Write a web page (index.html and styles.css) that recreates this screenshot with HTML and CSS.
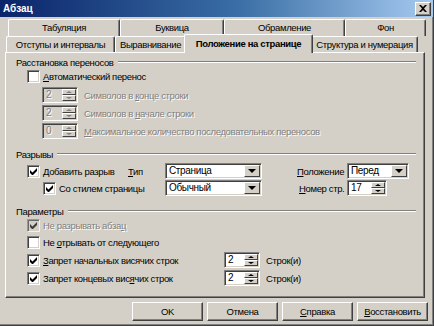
FILE: index.html
```html
<!DOCTYPE html>
<html lang="ru">
<head>
<meta charset="UTF-8" />
<title>Абзац</title>
<link rel="stylesheet" href="styles.css">
</head>
<body>

<div class="window">
  <div class="titlebar">
    <span class="title">Абзац</span>
    <span class="close">
      <svg width="8" height="7" viewBox="0 0 8 7"><path d="M0 0h2l2 2 2-2h2L5 3.5 8 7H6L4 5 2 7H0l3-3.5z" fill="#000"/></svg>
    </span>
  </div>

  <div class="tabs">
    <div class="tab-row back">
      <div class="tab" style="width:112px">Табуляция</div>
      <div class="tab" style="width:104px">Буквица</div>
      <div class="tab" style="width:121px">Обрамление</div>
      <div class="tab" style="width:81px">Фон</div>
    </div>
    <div class="tab-row front">
      <div class="tab" style="width:109px">Отступы и интервалы</div>
      <div class="tab" style="width:71px">Выравнивание</div>
      <div class="tab active" style="width:129px">Положение на странице</div>
      <div class="tab" style="width:107px">Структура и нумерация</div>
    </div>
  </div>

  <div class="panel">
    <div class="group-title first"><span>Расстановка переносов</span><i class="rule"></i></div>
    <label class="check-row">
      <span class="checkbox"></span><span><u>А</u>втоматический перенос</span>
    </label>
    <div class="spin-row disabled">
      <span class="spin"><span class="val">2</span><span class="arrows"><b class="up"></b><b class="down"></b></span></span>
      <span>Символов в <u>к</u>онце строки</span>
    </div>
    <div class="spin-row disabled">
      <span class="spin"><span class="val">2</span><span class="arrows"><b class="up"></b><b class="down"></b></span></span>
      <span>Символов в <u>н</u>ачале строки</span>
    </div>
    <div class="spin-row disabled">
      <span class="spin"><span class="val">0</span><span class="arrows"><b class="up"></b><b class="down"></b></span></span>
      <span><u>М</u>аксимальное количество последовательных переносов</span>
    </div>

    <div class="group-title"><span>Разрывы</span><i class="rule"></i></div>
    <div class="breaks">
      <label class="check-row cell-first">
        <span class="checkbox checked"></span><span>Добавить разрыв</span>
      </label>
      <span class="lbl"><u>Т</u>ип</span>
      <span class="select"><span class="val">Страница</span><span class="drop"><b class="down"></b></span></span>
      <span></span>
      <span class="lbl"><u>П</u>оложение</span>
      <span class="select short"><span class="val">Перед</span><span class="drop"><b class="down"></b></span></span>

      <label class="check-row cell-second">
        <span class="checkbox checked"></span><span>Со стилем страницы</span>
      </label>
      <span class="select"><span class="val">Обычный</span><span class="drop"><b class="down"></b></span></span>
      <span></span>
      <span class="lbl lbl-num"><u>Н</u>омер стр.</span>
      <span class="spin page"><span class="val">17</span><span class="arrows"><b class="up"></b><b class="down"></b></span></span>
    </div>

    <div class="group-title"><span>Параметры</span><i class="rule"></i></div>
    <label class="check-row p1 disabled">
      <span class="checkbox checked"></span><span>Не разрывать абза<u>ц</u></span>
    </label>
    <label class="check-row p">
      <span class="checkbox"></span><span>Не <u>о</u>трывать от следующего</span>
    </label>
    <div class="check-row p">
      <span class="check-wide"><span class="checkbox checked"></span><span><u>З</u>апрет начальных висячих строк</span></span>
      <span class="spin"><span class="val">2</span><span class="arrows"><b class="up"></b><b class="down"></b></span></span>
      <span class="unit">Строк(и)</span>
    </div>
    <div class="check-row p">
      <span class="check-wide"><span class="checkbox checked"></span><span>Запрет концевых вис<u>я</u>чих строк</span></span>
      <span class="spin"><span class="val">2</span><span class="arrows"><b class="up"></b><b class="down"></b></span></span>
      <span class="unit">Строк(и)</span>
    </div>
  </div>

  <div class="buttons">
    <button>OK</button>
    <button>Отмена</button>
    <button><u>С</u>правка</button>
    <button><u>В</u>осстановить</button>
  </div>
</div>

</body>
</html>
```

FILE: styles.css
```css
body {
  margin: 0;
  padding: 0;
  background: #d4d0c8;
  font-family: 'Liberation Sans', Arial, sans-serif;
  font-size: 9.5px;
  letter-spacing: -0.35px;
  color: #000;
}
u {
  text-decoration: underline;
  text-underline-offset: 1px;
}
.window {
  width: 434px;
  height: 326px;
  box-sizing: border-box;
  background: #d4d0c8;
  border-right: 1px solid #404040;
  border-bottom: 1px solid #404040;
  box-shadow: inset -1px -1px 0 #808080;
  overflow: hidden;
}
.titlebar {
  height: 17px;
  background: linear-gradient(to right, #0a246a, #3a6ea5 55%, #a6caf0);
  display: flex;
  align-items: center;
  justify-content: space-between;
  padding: 0 2px 0 3px;
}
.title {
  color: #fff;
  font-weight: bold;
  font-size: 10px;
  letter-spacing: 0;
}
.close {
  width: 14px;
  height: 12px;
  background: #d4d0c8;
  border-top: 1px solid #fff;
  border-left: 1px solid #fff;
  border-right: 1px solid #404040;
  border-bottom: 1px solid #404040;
  box-shadow: inset -1px -1px 0 #808080;
  display: flex;
  align-items: center;
  justify-content: center;
}

/* tabs */
.tabs {
  margin-top: 2px;
}
.tab-row {
  display: flex;
}
.tab-row.back {
  margin-left: 8px;
  height: 17px;
}
.tab-row.front {
  margin-left: 6px;
  height: 16px;
  position: relative;
  z-index: 2;
}
.tab {
  box-sizing: border-box;
  height: 100%;
  border-top: 1px solid #fff;
  border-left: 1px solid #fff;
  border-right: 1px solid #404040;
  box-shadow: inset -1px 0 0 #808080;
  border-radius: 2px 2px 0 0;
  text-align: center;
  line-height: 15px;
  white-space: nowrap;
  background: #d4d0c8;
}
.tab.active {
  font-weight: bold;
  height: 19px;
  margin: -2px -2px 0;
  line-height: 17px;
  position: relative;
  z-index: 3;
}

/* panel */
.panel {
  box-sizing: border-box;
  height: 246px;
  margin: 0 8px 0 5px;
  border-top: 1px solid #fff;
  border-left: 1px solid #fff;
  border-right: 1px solid #404040;
  border-bottom: 1px solid #404040;
  box-shadow: inset -1px -1px 0 #808080;
  padding: 0 8px 0 10px;
}
.group-title {
  display: flex;
  align-items: center;
  gap: 4px;
  height: 14px;
  margin-top: 8px;
}
.group-title.first {
  margin-top: 2px;
}
.rule {
  flex: 1;
  border-top: 1px solid #808080;
  border-bottom: 1px solid #fff;
}
.check-row {
  display: flex;
  align-items: center;
  gap: 3px;
  height: 14px;
  margin-left: 11px;
}
.checkbox {
  width: 13px;
  height: 13px;
  box-sizing: border-box;
  background: #fff;
  border-top: 1px solid #808080;
  border-left: 1px solid #808080;
  border-right: 1px solid #fff;
  border-bottom: 1px solid #fff;
  box-shadow: inset 1px 1px 0 #404040, inset -1px -1px 0 #d4d0c8;
  flex: none;
}
.checkbox.checked {
  background: #fff url("data:image/svg+xml,%3Csvg xmlns='http://www.w3.org/2000/svg' width='11' height='11'%3E%3Cpath d='M2 4v3l2 2h1l4-4V2L4.5 6.5z' fill='%23000'/%3E%3C/svg%3E") no-repeat center;
}
.disabled {
  color: #808080;
  text-shadow: 1px 1px 0 #fff;
}
.disabled .checkbox {
  background-color: #d4d0c8;
  opacity: 0.7;
}

.spin-row {
  display: flex;
  align-items: center;
  gap: 6px;
  height: 16px;
  margin: 2px 0 0 26px;
}
.check-row + .spin-row {
  margin-top: 4px;
}
.spin, .select {
  box-sizing: border-box;
  height: 16px;
  width: 36px;
  display: flex;
  align-items: center;
  background: #fff;
  border-top: 1px solid #808080;
  border-left: 1px solid #808080;
  border-right: 1px solid #fff;
  border-bottom: 1px solid #fff;
  box-shadow: inset 1px 1px 0 #404040, inset -1px -1px 0 #d4d0c8;
  padding: 1px;
  flex: none;
}
.disabled .spin {
  background: #d4d0c8;
}
.val {
  flex: 1;
  padding-left: 2px;
  line-height: 12px;
  font-size: 10px;
  overflow: hidden;
  white-space: nowrap;
}
.arrows {
  width: 14px;
  height: 12px;
  display: flex;
  flex-direction: column;
}
.arrows b, .drop {
  flex: 1;
  box-sizing: border-box;
  background: #d4d0c8;
  border-top: 1px solid #fff;
  border-left: 1px solid #fff;
  border-right: 1px solid #404040;
  border-bottom: 1px solid #404040;
  display: flex;
  align-items: center;
  justify-content: center;
}
.arrows b::after, .drop b::after {
  content: '';
  border-left: 3px solid transparent;
  border-right: 3px solid transparent;
}
.arrows .up::after {
  border-bottom: 2px solid #000;
}
.arrows .down::after, .drop b::after {
  border-top: 2px solid #000;
}
.disabled .arrows b::after {
  border-bottom-color: #808080;
  border-top-color: #808080;
}
.drop {
  flex: none;
  width: 16px;
  height: 12px;
}
.drop b::after {
  border-left-width: 4px;
  border-right-width: 4px;
  border-top-width: 4px;
}
.drop b {
  display: flex;
}

/* breaks grid */
.breaks {
  display: grid;
  grid-template-columns: 112px 37px 97px 35px 50px auto;
  grid-template-rows: 16px 16px;
  row-gap: 1px;
  margin-top: 2px;
  align-items: center;
}
.breaks .check-row {
  height: 16px;
}
.cell-second {
  grid-column: 1 / 3;
  margin-left: 27px;
}
.select {
  width: 97px;
}
.select.short {
  width: 62px;
}
.lbl-num {
  padding-left: 2px;
}
.spin.page {
  width: 40px;
}

/* parameters */
.p1 {
  margin-top: 0;
}
.check-row.p {
  height: 16px;
  margin-top: 2px;
}
.check-wide {
  display: flex;
  align-items: center;
  gap: 3px;
  width: 194px;
}
.check-row .unit {
  margin-left: 3px;
}

/* buttons */
.buttons {
  display: flex;
  justify-content: flex-end;
  gap: 4px;
  padding: 4px 5px 0 0;
}
button {
  width: 71px;
  height: 19px;
  box-sizing: border-box;
  background: #d4d0c8;
  font-family: inherit;
  font-size: 9.5px;
  letter-spacing: -0.35px;
  color: #000;
  border-top: 1px solid #fff;
  border-left: 1px solid #fff;
  border-right: 1px solid #404040;
  border-bottom: 1px solid #404040;
  box-shadow: inset -1px -1px 0 #808080;
  padding: 0;
  cursor: pointer;
}
```
